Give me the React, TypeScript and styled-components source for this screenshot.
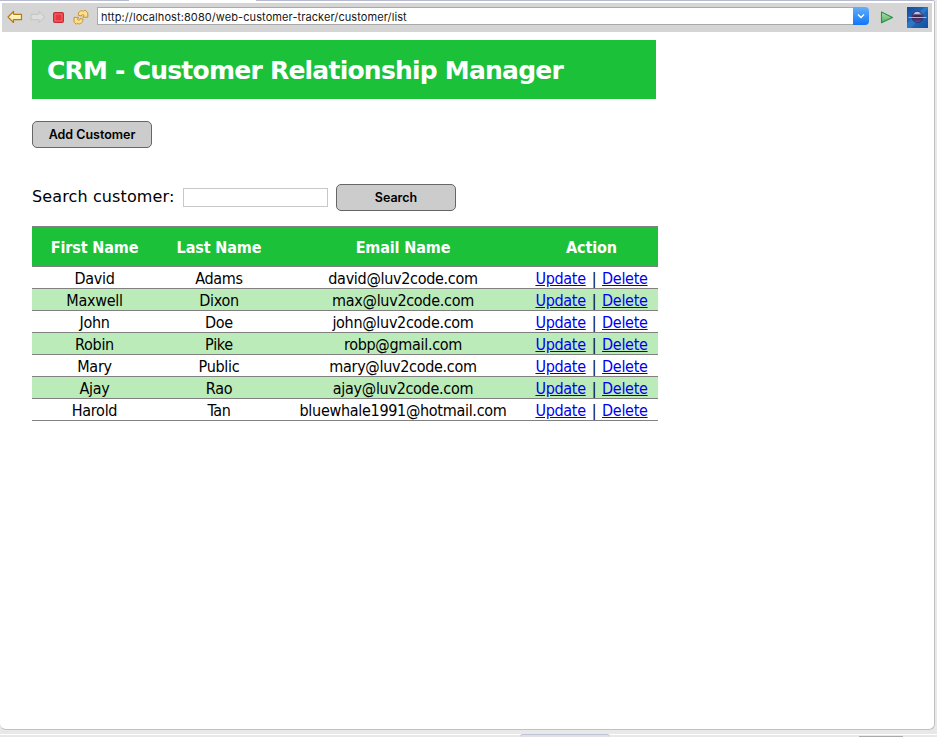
import React from "react";
import styled, { createGlobalStyle } from "styled-components";

const GlobalStyle = createGlobalStyle`
  * { box-sizing: border-box; }
  html, body { margin: 0; background: #e8e8e8; overflow: hidden; }
`;

const Shell = styled.div`
  width: 937px;
  height: 737px;
  display: flex;
  flex-direction: column;
  background: #e8e8e8;
`;
const TabEdge = styled.div`
  width: 934px;
  height: 1px;
  flex: none;
  background: linear-gradient(to right, #b6bad1 129px, #fff 129px, #fff 256px, #b6bad1 256px);
`;
const View = styled.main`
  width: 935px;
  height: 729px;
  flex: none;
  background: #fff;
  border: solid #bfc1c0;
  border-width: 0 1px 1px 0;
  border-radius: 0 0 6px 6px;
  padding-top: 2px;
`;
const Toolbar = styled.div`
  width: 930px;
  height: 29px;
  margin-left: 2px;
  background: #d5d5d5;
  display: flex;
  align-items: flex-start;
  padding: 4px 0 0 4px;
`;
const NavIcons = styled.div`
  display: flex;
  width: 91px;
  gap: 4px;
  padding-top: 1px;
  svg { display: block; width: 18px; height: 18px; }
`;
const Address = styled.div`
  display: flex;
  width: 772px;
  height: 18px;
`;
const AddressText = styled.div`
  flex: 1;
  height: 18px;
  background: #fff;
  border: 1px solid #aaa;
  border-right: 0;
  padding-left: 3px;
  font: 11px/18px Inter, sans-serif;
  letter-spacing: 0.09px;
  color: #161616;
  white-space: nowrap;
`;
const DropButton = styled.button`
  width: 16px;
  height: 18px;
  border: 0;
  padding: 0;
  border-radius: 0 4px 4px 0;
  background: linear-gradient(#62b0fb, #1175f8);
  svg { display: block; }
`;
const RunSlot = styled.div`
  width: 14px;
  margin: 4px 0 0 11px;
  svg { display: block; }
`;
const LogoSlot = styled.div`
  margin-left: 13px;
  svg { display: block; }
`;
const Page = styled.div`
  margin: 8px 0 0 32px;
  width: 626px;
  color: #000;
  font: 16px "DejaVu Sans", sans-serif;
`;
const Banner = styled.header`
  width: 624px;
  height: 59px;
  background: #1bc239;
  padding-left: 15px;
  h1 {
    margin: 0;
    color: #fff;
    font: bold 25px/62px "DejaVu Sans", sans-serif;
    letter-spacing: -0.77px;
    white-space: nowrap;
  }
`;
const ActionButton = styled.button`
  display: block;
  width: 120px;
  height: 27px;
  padding: 0;
  border: 1px solid #666;
  border-radius: 5px;
  background: #ccc;
  color: #000;
  font: 600 12.5px Inter, sans-serif;
  letter-spacing: -0.02px;
`;
const AddRow = styled.div`
  margin-top: 22px;
`;
const SearchRow = styled.form`
  display: flex;
  margin-top: 36px;
  height: 27px;
  label { width: 151px; line-height: 25px; letter-spacing: 0.12px; white-space: nowrap; }
`;
const SearchInput = styled.input`
  width: 145px;
  height: 19px;
  margin: 4px 8px 0 0;
  padding: 0 2px;
  border: 1px solid #c8c8c8;
  background: #fff;
`;
const Table = styled.table`
  width: 626px;
  margin-top: 15px;
  table-layout: fixed;
  border-collapse: collapse;
  font-family: "DejaVu Sans Condensed", "DejaVu Sans", sans-serif;
  font-stretch: condensed;
  font-size: 16px;
  text-align: center;
`;
const Row = styled.tr<{ $shaded?: boolean }>`
  height: 22px;
  background: ${p => (p.$shaded ? "#bbebb9" : "#fff")};
  border-bottom: 1px solid #808080;
`;
const HeadRow = styled.tr`
  height: 40px;
  background: #1bc239;
  border-top: 1px solid #808080;
  border-bottom: 1px solid #808080;
`;
const Head = styled.th`
  padding: 2px 0 0;
  color: #fff;
  line-height: 20px;
  letter-spacing: -0.12px;
`;
const Cell = styled.td`
  padding: 2px 0 0;
  line-height: 19px;
  letter-spacing: -0.3px;
  white-space: nowrap;
  a { color: #0000ee; text-decoration: underline; }
`;
const ActionCell = styled(Cell)`
  word-spacing: 1.6px;
`;
const BottomEdge = styled.div`
  height: 3px;
  margin-top: 4px;
  display: flex;
  align-items: flex-start;
  border-top: 1px solid #fff;
`;
const BottomTab = styled.div`
  width: 90px;
  height: 3px;
  margin: -1px 0 0 520px;
  background: #dfe0ea;
  border-top: 1px solid #bfc2d8;
  border-radius: 4px 4px 0 0;
`;
const BottomHandle = styled.div`
  width: 44px;
  height: 1px;
  margin: 1px 0 0 249px;
  background: #aaa;
`;

const arrowPath = "M2 9 L7.5 3.5 V6.3 H15.5 V11.7 H7.5 V14.5 Z";

function BackIcon() {
  return (
    <svg viewBox="0 0 18 18">
      <path d={arrowPath} fill="#fff0a8" stroke="#b77914" strokeWidth="1.2" strokeLinejoin="round" />
      <path d="M4 9 L6.7 6.3 V7.8 H14" fill="none" stroke="#fffbe0" />
    </svg>
  );
}
function ForwardIcon() {
  return (
    <svg viewBox="0 0 18 18">
      <path d={arrowPath} transform="translate(18.5 0) scale(-1 1)" fill="#dedede" stroke="#c2c2c2" strokeLinejoin="round" />
    </svg>
  );
}
function StopIcon() {
  return (
    <svg viewBox="0 0 18 18">
      <rect x="3.5" y="4.5" width="10" height="10" rx="1" fill="#e82c37" stroke="#c52e36" />
      <rect x="5" y="6" width="7" height="7" fill="#e7343f" stroke="#f27a80" strokeWidth=".8" />
    </svg>
  );
}
function RefreshIcon() {
  return (
    <svg viewBox="0 0 18 18" fill="#ffdf8a" stroke="#c48a20" strokeWidth=".9" strokeLinejoin="round">
      <path d="M6.3 7.2 C6 3.8 8.8 1.8 11.6 3.3 L13 2 L15.8 4.8 V9.2 H10.8 L12.1 7.4 C10.8 6.2 9.8 6.4 9.2 8 Z" />
      <path d="M11 11.2 C11 14.8 8 17 5.2 15.3 L4.3 16.3 L2 13.8 V9.4 H6.6 L5.5 11.5 C6.7 12.8 7.8 12.3 8.2 10.6 Z" />
    </svg>
  );
}
function RunIcon() {
  return (
    <svg width="14" height="13" viewBox="0 0 14 13">
      <defs><linearGradient id="run" x1="0" y1="0" x2="0" y2="1"><stop stopColor="#b6dfac" /><stop offset="1" stopColor="#4fae5c" /></linearGradient></defs>
      <path d="M1.5 1 L12.5 6.5 L1.5 11.8 Z" fill="url(#run)" stroke="#27904b" strokeWidth="1.1" strokeLinejoin="round" />
    </svg>
  );
}
function BrowserLogo() {
  return (
    <svg width="21" height="21" viewBox="0 0 21 21">
      <defs>
        <linearGradient id="sky" x1="0" y1="0" x2="1" y2="1"><stop stopColor="#134b9c" /><stop offset=".5" stopColor="#2269bb" /><stop offset="1" stopColor="#144d9f" /></linearGradient>
        <linearGradient id="planet" x1="0" y1="0" x2="0" y2="1"><stop stopColor="#aaa6d2" /><stop offset=".55" stopColor="#35204e" /><stop offset="1" stopColor="#675598" /></linearGradient>
      </defs>
      <rect width="21" height="21" fill="url(#sky)" />
      <path d="M0 16 L18 0 H21 V2 L4 21 H0 Z" fill="#3887d2" opacity=".5" />
      <circle cx="10.5" cy="10" r="5.6" fill="url(#planet)" stroke="#2b2258" strokeWidth=".7" />
      <path d="M7 7 C8 4.2 12 4 13 7 Z" fill="#d2d1e8" opacity=".8" />
      <path d="M1.5 10.5 H19.5" stroke="#b8a6dc" strokeWidth="1.1" />
      <path d="M6.5 9 H14.5" stroke="#281a43" strokeWidth="1.2" />
    </svg>
  );
}

const customers = [
  { first: "David", last: "Adams", email: "david@luv2code.com" },
  { first: "Maxwell", last: "Dixon", email: "max@luv2code.com" },
  { first: "John", last: "Doe", email: "john@luv2code.com" },
  { first: "Robin", last: "Pike", email: "robp@gmail.com" },
  { first: "Mary", last: "Public", email: "mary@luv2code.com" },
  { first: "Ajay", last: "Rao", email: "ajay@luv2code.com" },
  { first: "Harold", last: "Tan", email: "bluewhale1991@hotmail.com" },
];

export default function App() {
  return (
    <Shell>
      <GlobalStyle />
      <TabEdge />
      <View>
        <Toolbar>
          <NavIcons><BackIcon /><ForwardIcon /><StopIcon /><RefreshIcon /></NavIcons>
          <Address>
            <AddressText>http://localhost:8080/web-customer-tracker/customer/list</AddressText>
            <DropButton aria-label="History">
              <svg width="16" height="18" viewBox="0 0 16 18"><path d="M5 7.5 L8 10.5 L11 7.5" fill="none" stroke="#fff" strokeWidth="1.4" /></svg>
            </DropButton>
          </Address>
          <RunSlot><RunIcon /></RunSlot>
          <LogoSlot><BrowserLogo /></LogoSlot>
        </Toolbar>
        <Page>
          <Banner><h1>CRM - Customer Relationship Manager</h1></Banner>
          <AddRow><ActionButton>Add Customer</ActionButton></AddRow>
          <SearchRow onSubmit={e => e.preventDefault()}>
            <label htmlFor="search">Search customer:</label>
            <SearchInput id="search" />
            <ActionButton>Search</ActionButton>
          </SearchRow>
          <Table>
            <colgroup><col width="125" /><col width="124" /><col width="244" /><col width="133" /></colgroup>
            <thead>
              <HeadRow><Head>First Name</Head><Head>Last Name</Head><Head>Email Name</Head><Head>Action</Head></HeadRow>
            </thead>
            <tbody>
              {customers.map((c, i) => (
                <Row key={c.email} $shaded={i % 2 === 1}>
                  <Cell>{c.first}</Cell>
                  <Cell>{c.last}</Cell>
                  <Cell>{c.email}</Cell>
                  <ActionCell><a href="#">Update</a> | <a href="#">Delete</a></ActionCell>
                </Row>
              ))}
            </tbody>
          </Table>
        </Page>
      </View>
      <BottomEdge><BottomTab /><BottomHandle /></BottomEdge>
    </Shell>
  );
}
